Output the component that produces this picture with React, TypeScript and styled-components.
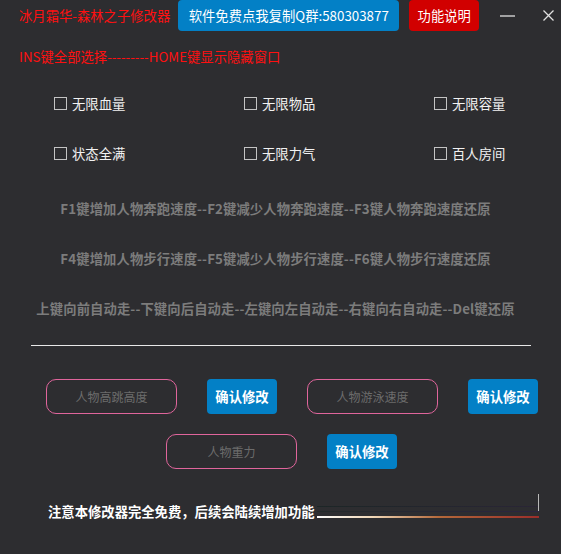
import React from 'react';
import styled, { createGlobalStyle } from 'styled-components';

const GlobalStyle = createGlobalStyle`
  html, body {
    margin: 0;
    padding: 0;
    background: #2d2d30;
  }
  body {
    font-family: "Noto Sans CJK SC", "Noto Sans", sans-serif;
    font-size: 13.33px;
  }
`;

const Window = styled.div`
  width: 561px;
  height: 554px;
  background: #2d2d30;
  display: flex;
  flex-direction: column;
  overflow: hidden;
`;

const Header = styled.div`
  display: flex;
  align-items: center;
  height: 31px;
  padding-left: 19px;
`;

const Title = styled.div`
  color: #ff1010;
  font-size: 13.33px;
  line-height: 31px;
  white-space: nowrap;
`;

const HeadButton = styled.button<{ $bg: string; $w: number; $ml: number }>`
  height: 31px;
  width: ${({ $w }) => $w}px;
  margin-left: ${({ $ml }) => $ml}px;
  background: ${({ $bg }) => $bg};
  color: #ffffff;
  border: none;
  border-radius: 4px;
  font-family: inherit;
  font-size: 13.33px;
  padding: 0;
  white-space: nowrap;
`;

const WinControl = styled.div<{ $ml: number }>`
  display: flex;
  align-items: center;
  margin-left: ${({ $ml }) => $ml}px;
  color: #c8c8c8;
`;

const HotkeyLine = styled.div`
  margin-top: 16px;
  padding-left: 19px;
  color: #ff1010;
  line-height: 20px;
  white-space: nowrap;
`;

const Options = styled.div`
  margin-top: 26px;
  padding-left: 54px;
  display: grid;
  grid-template-columns: 190px 190px auto;
  row-gap: 30px;
`;

const Option = styled.label`
  display: flex;
  align-items: center;
  height: 20px;
  color: #f2f2f2;
  white-space: nowrap;
`;

const Box = styled.span`
  width: 11px;
  height: 11px;
  border: 1px solid #c4c4c4;
  margin-right: 5px;
`;

const Hints = styled.div`
  margin-top: 36px;
  padding-right: 10px;
  display: flex;
  flex-direction: column;
  gap: 30px;
`;

const Hint = styled.div`
  color: #7c7c7c;
  font-weight: bold;
  line-height: 20px;
  text-align: center;
  white-space: nowrap;
  letter-spacing: 0.1px;
`;

const Divider = styled.div`
  margin: 26px 0 0 31px;
  width: 500px;
  height: 1px;
  background: #e8e8e8;
`;

const FormRow = styled.div<{ $mt: number; $pl: number }>`
  display: flex;
  gap: 30px;
  margin-top: ${({ $mt }) => $mt}px;
  padding-left: ${({ $pl }) => $pl}px;
`;

const Field = styled.div`
  box-sizing: border-box;
  width: 131px;
  height: 35px;
  border: 1px solid #e0659c;
  border-radius: 10px;
  display: flex;
  align-items: center;
  justify-content: center;
  color: #6c6c6c;
  font-size: 12px;
`;

const Confirm = styled.button`
  width: 70px;
  height: 35px;
  border: none;
  border-radius: 4px;
  background: #0380c6;
  color: #ffffff;
  font-family: inherit;
  font-weight: bold;
  font-size: 13.33px;
  padding: 0;
`;

const Footer = styled.div`
  margin-top: 25px;
  padding-left: 48px;
  display: flex;
  align-items: flex-end;
`;

const Notice = styled.div`
  color: #ffffff;
  font-weight: bold;
  line-height: 20px;
  white-space: nowrap;
  margin-bottom: -4px;
`;

const Track = styled.div`
  position: relative;
  width: 222px;
  height: 24px;
  margin-left: 2px;
  background:
    linear-gradient(to right, #fdfdfd, #f0d8b8 25%, #b4683a 55%, #9a2e2a) bottom / 100% 2px no-repeat,
    linear-gradient(to right, #1c2626, #2a2536) 0 12px / 100% 1px no-repeat,
    linear-gradient(to right, #232a2a, #2b2540) 0 17px / 100% 1px no-repeat;
  &::after {
    content: '';
    position: absolute;
    right: 0;
    top: 0;
    width: 1px;
    height: 17px;
    background: #b8b8b8;
  }
`;

const options = ['无限血量', '无限物品', '无限容量', '状态全满', '无限力气', '百人房间'];

const hints = [
  'F1键增加人物奔跑速度--F2键减少人物奔跑速度--F3键人物奔跑速度还原',
  'F4键增加人物步行速度--F5键减少人物步行速度--F6键人物步行速度还原',
  '上键向前自动走--下键向后自动走--左键向左自动走--右键向右自动走--Del键还原',
];

export default function App() {
  return (
    <Window>
      <GlobalStyle />
      <Header>
        <Title>冰月霜华-森林之子修改器</Title>
        <HeadButton $bg="#0380c6" $w={221} $ml={8}>软件免费点我复制Q群:580303877</HeadButton>
        <HeadButton $bg="#d10000" $w={70} $ml={10}>功能说明</HeadButton>
        <WinControl $ml={21}>
          <svg width="15" height="2" viewBox="0 0 15 2">
            <line x1="0" y1="1" x2="15" y2="1" stroke="#c8c8c8" strokeWidth="1.5" />
          </svg>
        </WinControl>
        <WinControl $ml={28}>
          <svg width="11" height="11" viewBox="0 0 11 11">
            <path d="M0.5 0.5 L10.5 10.5 M10.5 0.5 L0.5 10.5" stroke="#e0e0e0" strokeWidth="1.3" />
          </svg>
        </WinControl>
      </Header>
      <HotkeyLine>INS键全部选择---------HOME键显示隐藏窗口</HotkeyLine>
      <Options>
        {options.map((o) => (
          <Option key={o}>
            <Box />
            {o}
          </Option>
        ))}
      </Options>
      <Hints>
        {hints.map((h) => (
          <Hint key={h}>{h}</Hint>
        ))}
      </Hints>
      <Divider />
      <FormRow $mt={33} $pl={46}>
        <Field>人物高跳高度</Field>
        <Confirm>确认修改</Confirm>
        <Field>人物游泳速度</Field>
        <Confirm>确认修改</Confirm>
      </FormRow>
      <FormRow $mt={20} $pl={166}>
        <Field>人物重力</Field>
        <Confirm>确认修改</Confirm>
      </FormRow>
      <Footer>
        <Notice>注意本修改器完全免费，后续会陆续增加功能</Notice>
        <Track />
      </Footer>
    </Window>
  );
}
